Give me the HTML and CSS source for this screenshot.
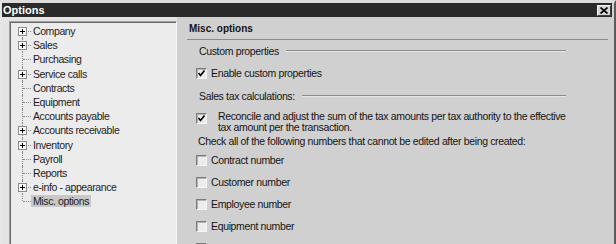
FILE: index.html
```html
<!DOCTYPE html>
<html>
<head>
<meta charset="utf-8">
<title>Options</title>
<link rel="stylesheet" href="styles.css">
</head>
<body>
<div class="window">
  <div class="titlebar">
    <span class="title">Options</span>
    <span class="close"><svg width="8" height="7" viewBox="0 0 8 7"><path d="M0.5 0.5 L7.5 6.5 M7.5 0.5 L0.5 6.5" stroke="#000" stroke-width="1.6" fill="none"/></svg></span>
  </div>
  <div class="content">
    <div class="leftpane">
      <ul class="tree">
        <li class="node first"><span class="twig"><span class="plus"></span></span><span class="label">Company</span></li>
        <li class="node"><span class="twig"><span class="plus"></span></span><span class="label">Sales</span></li>
        <li class="node"><span class="twig"></span><span class="label">Purchasing</span></li>
        <li class="node"><span class="twig"><span class="plus"></span></span><span class="label">Service calls</span></li>
        <li class="node"><span class="twig"></span><span class="label">Contracts</span></li>
        <li class="node"><span class="twig"></span><span class="label">Equipment</span></li>
        <li class="node"><span class="twig"></span><span class="label">Accounts payable</span></li>
        <li class="node"><span class="twig"><span class="plus"></span></span><span class="label">Accounts receivable</span></li>
        <li class="node"><span class="twig"><span class="plus"></span></span><span class="label">Inventory</span></li>
        <li class="node"><span class="twig"></span><span class="label">Payroll</span></li>
        <li class="node"><span class="twig"></span><span class="label">Reports</span></li>
        <li class="node"><span class="twig"><span class="plus"></span></span><span class="label">e-info - appearance</span></li>
        <li class="node last"><span class="twig"></span><span class="label selected">Misc. options</span></li>
      </ul>
    </div>
    <div class="rightpane">
      <div class="header">Misc. options</div>
      <div class="group g1"><span>Custom properties</span><span class="rule"></span></div>
      <div class="check r1"><span class="box checked"><svg width="9" height="9" viewBox="0 0 9 9"><path d="M1.5 4 L3.5 6.5 L7.5 1.5" stroke="#000" stroke-width="1.7" fill="none"/></svg></span><span>Enable custom properties</span></div>
      <div class="group g2"><span>Sales tax calculations:</span><span class="rule"></span></div>
      <div class="check multi r2"><span class="box checked"><svg width="9" height="9" viewBox="0 0 9 9"><path d="M1.5 4 L3.5 6.5 L7.5 1.5" stroke="#000" stroke-width="1.7" fill="none"/></svg></span><span class="mtext">Reconcile and adjust the sum of the tax amounts per tax authority to the effective<br>tax amount per the transaction.</span></div>
      <div class="note">Check all of the following numbers that cannot be edited after being created:</div>
      <div class="check list"><span class="box"></span><span>Contract number</span></div>
      <div class="check list"><span class="box"></span><span>Customer number</span></div>
      <div class="check list"><span class="box"></span><span>Employee number</span></div>
      <div class="check list"><span class="box"></span><span>Equipment number</span></div>
      <div class="check list"><span class="box"></span><span>Inventory number</span></div>
    </div>
  </div>
</div>
</body>
</html>
```

FILE: styles.css
```css
* { box-sizing: border-box; }
html, body { margin: 0; padding: 0; }
body {
  width: 616px;
  height: 244px;
  overflow: hidden;
  background: #d0d0d0;
  font-family: "Liberation Sans", Arial, sans-serif;
}
.window {
  width: 616px;
  height: 244px;
  display: flex;
  flex-direction: column;
  border-top: 3px solid #dcdcdc;
  border-left: 2px solid #e6e6e6;
  border-right: 2px solid #5c5c5c;
  padding-right: 2px;
  background: #d0d0d0;
  overflow: hidden;
}
.titlebar {
  height: 14px;
  flex: none;
  background: #2a2a2a;
  display: flex;
  align-items: center;
  justify-content: space-between;
  padding: 0 1px 0 1px;
}
.title {
  color: #fff;
  font-weight: bold;
  font-size: 11px;
  line-height: 14px;
}
.close {
  width: 14px;
  height: 11px;
  background: #d4d4d4;
  border: 1px solid;
  border-color: #f6f6f6 #404040 #404040 #f6f6f6;
  display: flex;
  align-items: center;
  justify-content: center;
}
.close svg { display: block; }
.content {
  flex: 1;
  display: flex;
  min-height: 0;
}
.leftpane {
  width: 175px;
  flex: none;
  background: #e4e4e4;
  padding: 4px 0 0 7px;
}
.tree {
  list-style: none;
  margin: 0;
  height: 240px;
  padding: 2px 0 0 0;
  background: #ececec;
  border-left: 1px solid #a0a0a0;
  border-top: 1px solid #a0a0a0;
  border-right: 1px solid #f8f8f8;
  box-shadow: inset 1px 1px 0 #6a6a6a;
  font-size: 10.5px;
  letter-spacing: -0.4px;
  color: #1c1c1c;
}
.node {
  height: 14.2px;
  display: flex;
  align-items: center;
}
.twig {
  position: relative;
  width: 21px;
  height: 100%;
  flex: none;
}
.twig::before {
  content: "";
  position: absolute;
  left: 12px;
  top: 0;
  bottom: 0;
  border-left: 1px dotted #8a8a8a;
}
.node.first .twig::before { top: 50%; }
.node.last .twig::before { bottom: 50%; }
.twig::after {
  content: "";
  position: absolute;
  left: 13px;
  width: 8px;
  top: 50%;
  border-top: 1px dotted #8a8a8a;
}
.plus {
  position: absolute;
  left: 8px;
  top: 50%;
  margin-top: -4px;
  width: 9px;
  height: 9px;
  border: 1px solid #8a8a8a;
  background: #fafafa;
  z-index: 1;
}
.plus::before {
  content: "";
  position: absolute;
  left: 1px;
  top: 3px;
  width: 5px;
  height: 1px;
  background: #000;
}
.plus::after {
  content: "";
  position: absolute;
  left: 3px;
  top: 1px;
  width: 1px;
  height: 5px;
  background: #000;
}
.label {
  padding: 0 2px;
  line-height: 12px;
  white-space: nowrap;
}
.label.selected { background: #c8c8c8; }

.rightpane {
  flex: 1;
  display: flex;
  flex-direction: column;
  font-size: 10.5px;
  letter-spacing: -0.35px;
  color: #141414;
}
.rightpane > * { flex: none; }
.header {
  margin: 0 4px 0 10px;
  padding: 5px 0 3px 2px;
  line-height: 14px;
  font-size: 10px;
  font-weight: bold;
  letter-spacing: 0;
  border-bottom: 1px solid #8c8c8c;
}
.group {
  display: flex;
  align-items: center;
  gap: 7px;
  height: 14px;
  padding-left: 22px;
  margin-right: 46px;
  white-space: nowrap;
}
.group .rule {
  flex: 1;
  height: 0;
  border-top: 1px solid #8c8c8c;
  border-bottom: 1px solid #e6e6e6;
}
.g1 { margin-top: 4px; }
.g2 { margin-top: 9px; }
.check {
  display: flex;
  align-items: center;
  height: 14px;
  padding-left: 19px;
  white-space: nowrap;
}
.r1 { margin-top: 8px; }
.box {
  width: 11px;
  height: 11px;
  flex: none;
  margin-right: 4px;
  border: 1px solid;
  border-color: #7a7a7a #f6f6f6 #f6f6f6 #7a7a7a;
  box-shadow: inset 1px 1px 0 #b4b4b4;
  background: #ececec;
  display: flex;
  align-items: center;
  justify-content: center;
}
.box svg { display: block; }
.check.multi {
  height: auto;
  align-items: flex-start;
  margin-top: 8px;
}
.check.multi .box { margin-top: 2px; margin-right: 11px; }
.mtext { line-height: 10.5px; }
.note {
  margin-top: 3px;
  padding-left: 21px;
  height: 13px;
  line-height: 13px;
  white-space: nowrap;
}
.list { margin-top: 8px; }
.note + .list { margin-top: 5px; }
```
